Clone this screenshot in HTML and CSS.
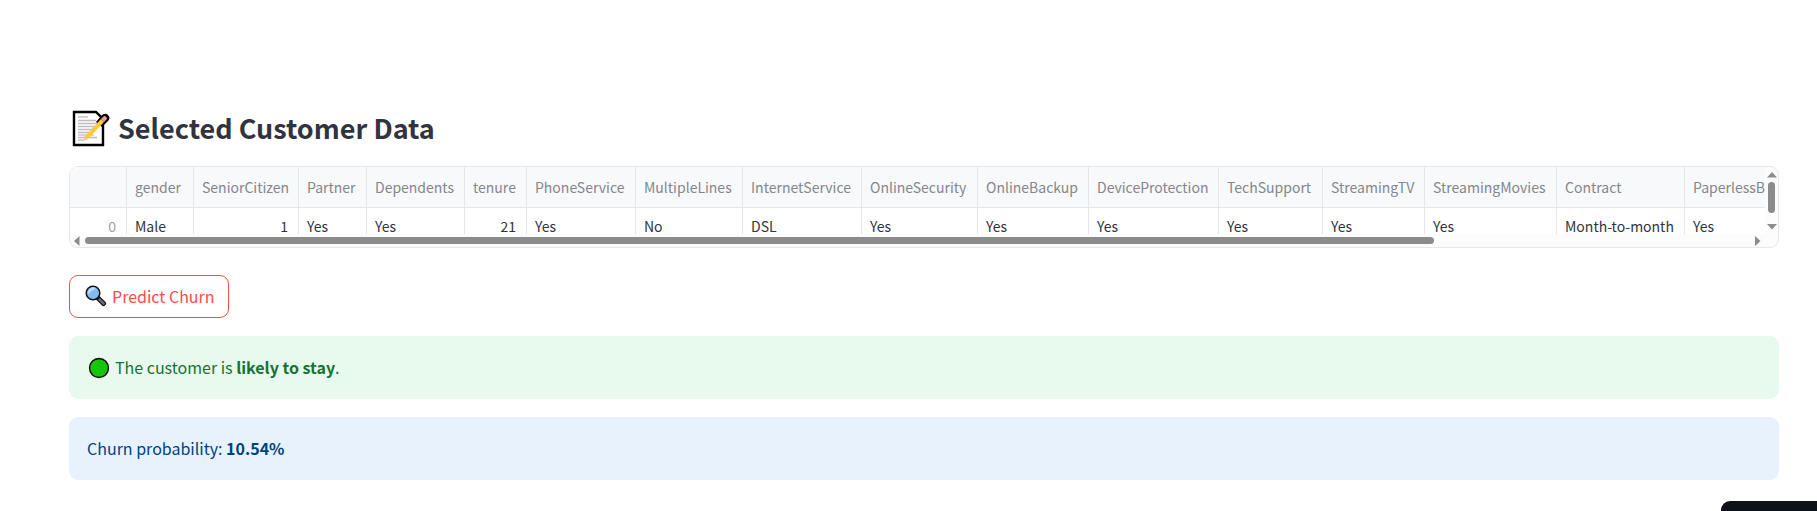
FILE: index.html
```html
<!DOCTYPE html>
<html lang="en">
<head>
<meta charset="utf-8">
<title>Customer Churn</title>
<link rel="stylesheet" href="styles.css">
</head>
<body>
<main class="page">
  <h2 class="title">
    <svg class="memo" viewBox="0 0 38 38" aria-hidden="true">
      <path d="M2 2H24L31 9V35H2Z" fill="#fff" stroke="#000" stroke-width="2.400"/>
      <path d="M6 7H16M6 25H22M6 30H12" stroke="#aaa" stroke-width="1"/>
      <path d="M6 10.500H24M6 13.500H26M6 16.500H24M6 19.500H22M6 22.500H20M6 27.500H25" stroke="#bdbdbd" stroke-width="1.300"/>
      <path d="M24 12L29 6Q33 2 36 5Q39 8 36 11L30 17Z" fill="#000"/>
      <path d="M11 31L13 26L29 9L32 12L16 29Z" fill="#ffc83d"/>
      <path d="M11 31L13 26L16 29Z" fill="#f5c4a5"/>
      <path d="M29 9L31 7Q33 5 34 7Q36 8 34 10L32 12Z" fill="#f19a91"/>
    </svg>
    <span>Selected Customer Data</span>
  </h2>

  <section class="grid" aria-label="Customer data">
    <div class="viewport">
      <table class="data">
        <thead>
          <tr><th></th><th>gender</th><th>SeniorCitizen</th><th>Partner</th><th>Dependents</th><th>tenure</th><th>PhoneService</th><th>MultipleLines</th><th>InternetService</th><th>OnlineSecurity</th><th>OnlineBackup</th><th>DeviceProtection</th><th>TechSupport</th><th>StreamingTV</th><th>StreamingMovies</th><th>Contract</th><th>PaperlessBilling</th></tr>
        </thead>
        <tbody>
          <tr><td class="index">0</td><td>Male</td><td class="number">1</td><td>Yes</td><td>Yes</td><td class="number">21</td><td>Yes</td><td>No</td><td>DSL</td><td>Yes</td><td>Yes</td><td>Yes</td><td>Yes</td><td>Yes</td><td>Yes</td><td>Month-to-month</td><td>Yes</td></tr>
        </tbody>
      </table>
    </div>
    <div class="vbar">
      <svg class="arrow-v" viewBox="0 0 10 6"><path d="M0 5.500L5 0L10 5.500Z"/></svg>
      <div class="vthumb"></div>
      <svg class="arrow-v" viewBox="0 0 10 6"><path d="M0 0H10L5 5.500Z"/></svg>
    </div>
    <div class="hbar">
      <svg class="arrow-h" viewBox="0 0 6 10"><path d="M5.500 0V10L0 5Z"/></svg>
      <div class="htrack"><div class="hthumb"></div></div>
      <svg class="arrow-h" viewBox="0 0 6 10"><path d="M0 0L5.500 5L0 10Z"/></svg>
    </div>
  </section>

  <button class="predict" type="button">
    <svg class="lens" viewBox="0 0 22 22" aria-hidden="true">
      <path d="M12 12L18.500 18.500" stroke="#111" stroke-width="5" stroke-linecap="round"/>
      <path d="M14.500 14.500L18.500 18.500" stroke="#636c73" stroke-width="2.600" stroke-linecap="round"/>
      <circle cx="8" cy="8" r="6.800" fill="#83bdf0" stroke="#111" stroke-width="1.500"/>
      <path d="M3 9A5.500 5.500 0 0 1 11 3Z" fill="#b9dcf7"/>
    </svg>
    <span>Predict Churn</span>
  </button>

  <div class="alert success" role="status">
    <svg class="dot" viewBox="0 0 22 22" aria-hidden="true"><circle cx="11" cy="11" r="9.500" fill="#16c60c" stroke="#000" stroke-width="1.300"/></svg>
    <p>The customer is <strong>likely to stay</strong>.</p>
  </div>
  <div class="alert info" role="status">
    <p>Churn probability: <strong>10.54%</strong></p>
  </div>
</main>
<div class="corner"></div>
</body>
</html>
```
FILE: styles.css
```css
* { box-sizing: border-box; }

body {
  margin: 0;
  background: #fff;
  color: #31333f;
  font-family: "Noto Sans CJK SC", "Noto Sans", sans-serif;
  font-size: 16px;
}

.page { padding: 106px 38px 0 69px; }

.title {
  display: flex;
  align-items: center;
  gap: 8px;
  height: 46px;
  margin: 0 0 14px;
  font-size: 27px;
  font-weight: 600;
  line-height: 44px;
}

.title span { padding-bottom: 2px; }

.memo { width: 38px; height: 38px; margin-left: 3px; }

.grid {
  display: grid;
  grid-template-columns: minmax(0, 1fr) 13px;
  grid-template-rows: 67px 13px;
  overflow: hidden;
  background: #fcfcfc;
  border: 1px solid #e6e7e9;
  border-radius: 9px;
}

.viewport { overflow: hidden; background: #fff; }

.data {
  width: 1745px;
  table-layout: fixed;
  border-collapse: separate;
  border-spacing: 0;
  font-size: 14px;
  line-height: 20px;
}

.data th,
.data td {
  height: 37px;
  padding: 0 8px;
  border-right: 1px solid #e6e7e9;
  border-bottom: 1px solid #e6e7e9;
  font-weight: 400;
  text-align: left;
  white-space: nowrap;
}

.data th { height: 41px; background: #f8f9fb; color: #84868e; }
.data .index, .data .number { text-align: right; padding-right: 10px; }
.data .index { color: #a0a1a7; }

.data th:nth-child(1) { width: 57px; }
.data th:nth-child(2) { width: 67px; }
.data th:nth-child(3) { width: 105px; }
.data th:nth-child(4) { width: 68px; }
.data th:nth-child(5) { width: 98px; }
.data th:nth-child(6) { width: 62px; }
.data th:nth-child(7) { width: 109px; }
.data th:nth-child(8) { width: 107px; }
.data th:nth-child(9) { width: 119px; }
.data th:nth-child(10) { width: 116px; }
.data th:nth-child(11) { width: 111px; }
.data th:nth-child(12) { width: 130px; }
.data th:nth-child(13) { width: 104px; }
.data th:nth-child(14) { width: 102px; }
.data th:nth-child(15) { width: 132px; }
.data th:nth-child(16) { width: 128px; }

.arrow-v, .arrow-h { flex: none; fill: #8b8b8b; }
.arrow-v { width: 10px; height: 6px; }
.arrow-h { width: 6px; height: 10px; }

.vbar {
  display: flex;
  flex-direction: column;
  align-items: center;
  padding: 5px 0 4px;
}

.vthumb { width: 7px; height: 31px; margin: 4px 0 auto; border-radius: 4px; background: #8b8b8b; }

.hbar { display: flex; align-items: center; padding: 0 4px; }
.htrack { flex: 1; padding: 0 5px; }
.hthumb { width: 81%; height: 7px; border-radius: 4px; background: #8b8b8b; }

.predict {
  display: flex;
  align-items: center;
  gap: 5px;
  height: 43px;
  margin: 27px 0 18px;
  padding: 0 13px 2px 15px;
  border: 1px solid #ff4b4b;
  border-radius: 9px;
  background: #fff;
  color: #ff4b4b;
  font: inherit;
}

.lens { width: 22px; height: 22px; }

.alert {
  display: flex;
  align-items: center;
  gap: 5px;
  height: 63px;
  margin-bottom: 18px;
  padding: 0 18px;
  border-radius: 9px;
}

.alert p { margin: 0; padding-bottom: 2px; line-height: 28px; }
.alert strong { font-weight: 600; }
.success { padding-left: 19px; background: #e8f9ee; color: #177233; }
.info { background: #e8f2fc; color: #004280; }
.dot { width: 22px; height: 22px; }

.corner {
  position: fixed;
  right: 0;
  bottom: 0;
  width: 96px;
  height: 10px;
  border-top-left-radius: 9px;
  background: #0e1117;
}
```
